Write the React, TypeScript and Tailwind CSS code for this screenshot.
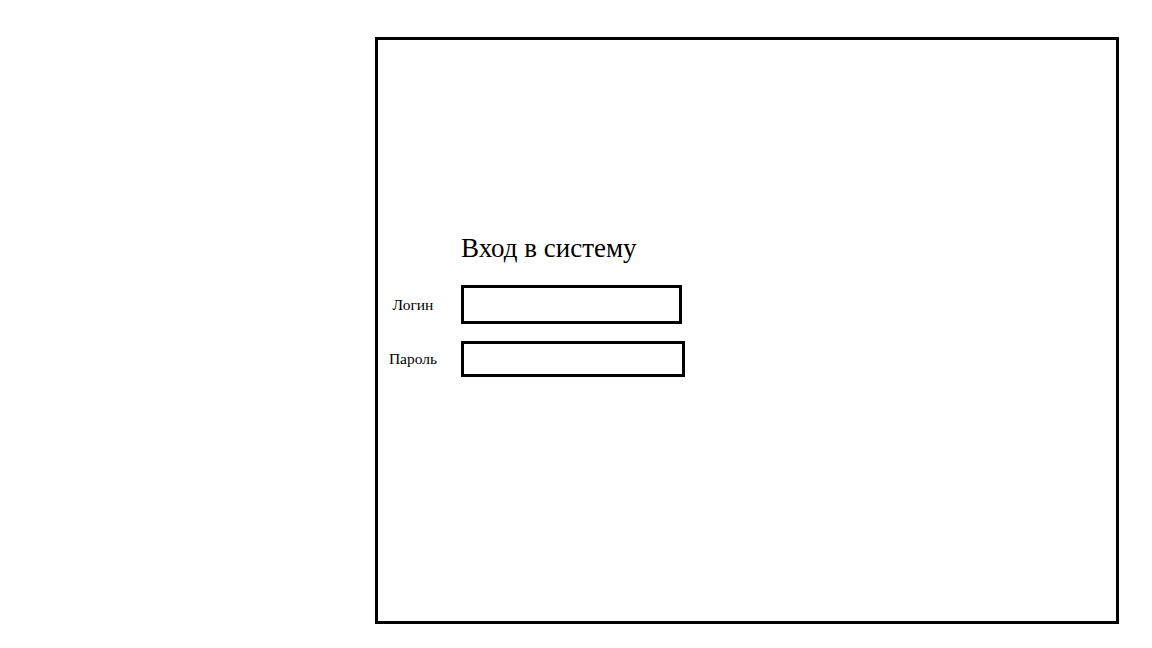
export default function App() {
  return (
    <div className="min-h-screen bg-white pt-[37px] pl-[375px] font-['Liberation_Serif',serif] text-black">
      <div className="w-[744px] h-[587px] border-[3px] border-black pt-[193px]">
        <div className="grid grid-cols-[70px_auto] gap-x-[13px] items-center justify-start">
          <div />
          <h1 className="text-[27px] leading-[30px] mb-[22px]">Вход в систему</h1>

          <label className="text-[15.5px] text-center">Логин</label>
          <input
            type="text"
            className="w-[221px] h-[39px] border-[3px] border-black outline-none"
          />

          <label className="text-[15.5px] text-center mt-[17px]">Пароль</label>
          <input
            type="password"
            className="w-[224px] h-[36px] border-[3px] border-black outline-none mt-[17px]"
          />
        </div>
      </div>
    </div>
  );
}
